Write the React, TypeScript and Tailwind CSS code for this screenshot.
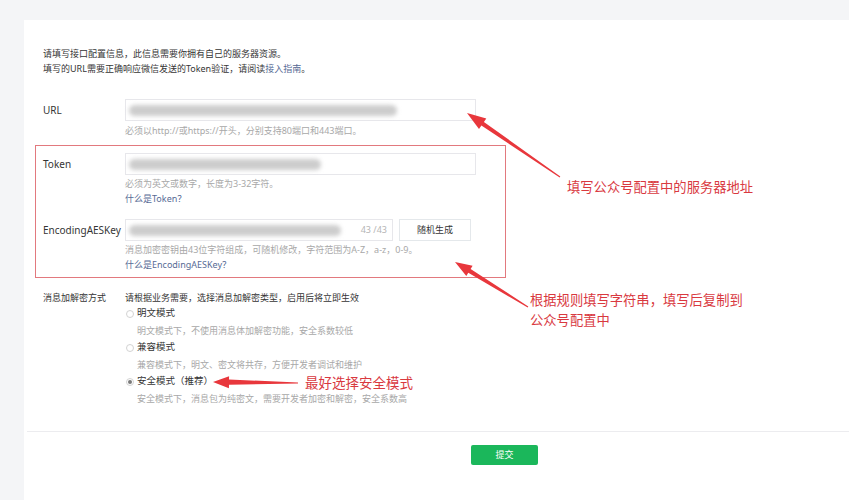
import React from 'react';

const font = { fontFamily: '"Microsoft YaHei", "Noto Sans", "Noto Sans CJK SC", sans-serif' };

type Pt = [number, number];

// tapered annotation arrow: thin tail, wide neck, triangular head
function arrowPoints(tail: Pt, tip: Pt, headLen: number, headW: number, neckW: number) {
  const dx = tip[0] - tail[0];
  const dy = tip[1] - tail[1];
  const len = Math.hypot(dx, dy);
  const ux = dx / len;
  const uy = dy / len;
  const nx = -uy;
  const ny = ux;
  const bx = tip[0] - ux * headLen;
  const by = tip[1] - uy * headLen;
  const pts: Pt[] = [
    [tail[0] + nx * 0.6, tail[1] + ny * 0.6],
    [bx + nx * neckW, by + ny * neckW],
    [bx + nx * headW, by + ny * headW],
    tip,
    [bx - nx * headW, by - ny * headW],
    [bx - nx * neckW, by - ny * neckW],
    [tail[0] - nx * 0.6, tail[1] - ny * 0.6],
  ];
  return pts.map((p) => p.map((v) => v.toFixed(1)).join(',')).join(' ');
}

function Blur({ w }: { w: number }) {
  return (
    <div className="flex items-center h-full pl-[3px]">
      <div className="h-[11px] bg-[#cdcdcd] blur-[2px] rounded-full" style={{ width: w }} />
    </div>
  );
}

function Radio({ label, desc, checked }: { label: string; desc: string; checked?: boolean }) {
  return (
    <div>
      <div className="flex items-center h-[17px]">
        <span className="ml-[1px] mr-[3px] w-[8px] h-[8px] rounded-full border border-[#d3d3d3] flex items-center justify-center bg-white">
          {checked && <span className="w-[4px] h-[4px] rounded-full bg-[#7a7a7a]" />}
        </span>
        <span className="text-[9.5px] text-[#353535]">{label}</span>
      </div>
      <div className="pl-[12px] h-[17px] leading-[17px] text-[9px] text-[#a8a8a8]">{desc}</div>
    </div>
  );
}

export default function App() {
  return (
    <div className="relative w-[849px] h-[500px] overflow-hidden bg-[#f4f5f7] pt-[20px] pl-[24px]" style={font}>
      <div className="bg-white h-full pl-[19px] pt-[26px]">
        <div className="text-[9px] leading-[15px] text-[#353535]">
          <p>请填写接口配置信息，此信息需要你拥有自己的服务器资源。</p>
          <p>
            填写的URL需要正确响应微信发送的Token验证，请阅读<span className="text-[#576b95]">接入指南</span>。
          </p>
        </div>

        {/* URL */}
        <div className="flex mt-[23px]">
          <div className="w-[82px] text-[10px] leading-[22px] text-[#353535]">URL</div>
          <div className="w-[351px]">
            <div className="h-[22px] border border-[#e7e7eb]">
              <Blur w={268} />
            </div>
            <div className="mt-[2px] text-[9px] leading-[15px] text-[#a8a8a8]">
              必须以http://或https://开头，分别支持80端口和443端口。
            </div>
          </div>
        </div>

        {/* highlighted block */}
        <div className="mt-[7px] -ml-[8px] w-[471px] border border-solid border-[#e2797e] pl-[7px] pt-[7px] pb-[5px]">
          <div className="flex">
            <div className="w-[82px] text-[10px] leading-[22px] text-[#353535]">Token</div>
            <div className="w-[351px]">
              <div className="h-[22px] border border-[#e7e7eb]">
                <Blur w={192} />
              </div>
              <div className="mt-[1px] text-[9px] leading-[15px] text-[#a8a8a8]">必须为英文或数字，长度为3-32字符。</div>
              <div className="text-[9px] leading-[15px] text-[#576b95]">什么是Token？</div>
            </div>
          </div>

          <div className="flex mt-[13px]">
            <div className="w-[82px] text-[10px] leading-[22px] text-[#353535]">EncodingAESKey</div>
            <div>
              <div className="flex gap-[6px]">
                <div className="w-[268px] h-[22px] border border-[#e7e7eb] flex items-center justify-between pr-[5px]">
                  <Blur w={212} />
                  <span className="text-[9px] text-[#b5b5b5]">43 /43</span>
                </div>
                <div className="w-[72px] h-[22px] border border-[#e4e8eb] bg-white flex items-center justify-center text-[9px] text-[#353535]">
                  随机生成
                </div>
              </div>
              <div className="mt-[1px] text-[9px] leading-[15px] text-[#a8a8a8]">
                消息加密密钥由43位字符组成，可随机修改，字符范围为A-Z，a-z，0-9。
              </div>
              <div className="text-[9px] leading-[15px] text-[#576b95]">什么是EncodingAESKey？</div>
            </div>
          </div>
        </div>

        {/* encryption mode */}
        <div className="flex mt-[12px]">
          <div className="w-[82px] text-[9px] leading-[15px] text-[#353535]">消息加解密方式</div>
          <div>
            <div className="text-[9px] leading-[15px] text-[#353535]">请根据业务需要，选择消息加解密类型，启用后将立即生效</div>
            <Radio label="明文模式" desc="明文模式下，不使用消息体加解密功能，安全系数较低" />
            <Radio label="兼容模式" desc="兼容模式下，明文、密文将共存，方便开发者调试和维护" />
            <Radio label="安全模式（推荐）" desc="安全模式下，消息包为纯密文，需要开发者加密和解密，安全系数高" checked />
          </div>
        </div>

        <div className="mt-[24px] -ml-[16px] h-px bg-[#ececef]" />

        <div className="mt-[13px] ml-[428px] w-[67px] h-[20px] rounded-[2px] bg-[#1bb75b] flex items-center justify-center text-[9px] text-white">
          提交
        </div>
      </div>

      {/* annotations */}
      <svg className="absolute inset-0 pointer-events-none" width="849" height="500" viewBox="0 0 849 500">
        <polygon points={arrowPoints([560, 177], [467, 113], 19, 6.5, 2.2)} fill="#e8373c" />
        <polygon points={arrowPoints([528, 307], [455, 262], 17, 6, 2.2)} fill="#e8373c" />
        <polygon points={arrowPoints([298, 383], [213, 382], 16, 6, 2.6)} fill="#e8373c" />
      </svg>
      <div className="absolute left-[567px] top-[177px] text-[13.3px] leading-[20px] text-[#d9393f] whitespace-nowrap">
        填写公众号配置中的服务器地址
      </div>
      <div className="absolute left-[530px] top-[290px] text-[13.3px] leading-[20px] text-[#d9393f] whitespace-nowrap">
        <p>根据规则填写字符串，填写后复制到</p>
        <p>公众号配置中</p>
      </div>
      <div className="absolute left-[305px] top-[373px] text-[13.5px] leading-[20px] text-[#d9393f] whitespace-nowrap">
        最好选择安全模式
      </div>
    </div>
  );
}
